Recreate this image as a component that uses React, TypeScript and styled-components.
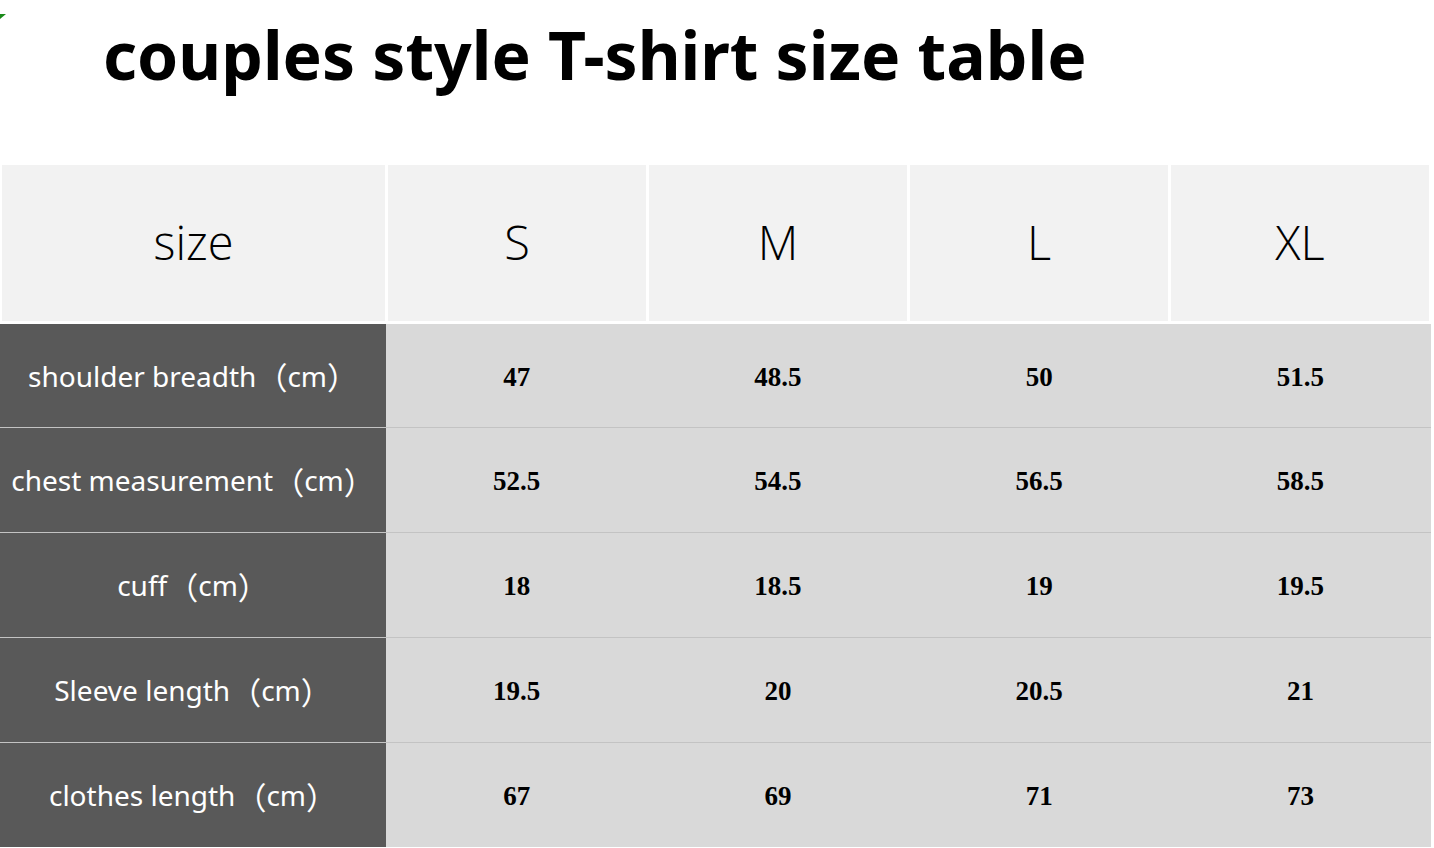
import React from 'react'
import styled, { createGlobalStyle } from 'styled-components'

const GlobalStyle = createGlobalStyle`
  html, body {
    margin: 0;
    padding: 0;
    background: #ffffff;
  }
`;

const Page = styled.div`
  position: relative;
  width: 1434px;
  height: 848px;
  overflow: hidden;
  background: #ffffff;
`;

const Corner = styled.svg`
  position: absolute;
  left: 0;
  top: 14px;
`;

const Title = styled.h1`
  margin: 0;
  height: 165px;
  padding: 9px 0 0 103px;
  box-sizing: border-box;
  font-family: "Noto Sans", "Open Sans", sans-serif;
  font-weight: 700;
  font-size: 66px;
  line-height: 90px;
  color: #000;
`;

const HeadRow = styled.div`
  display: grid;
  grid-template-columns: 383px repeat(4, 258px);
  column-gap: 3px;
  padding-left: 2px;
  height: 156px;
  margin-bottom: 3px;
`;

const HeadCell = styled.div`
  display: flex;
  align-items: center;
  justify-content: center;
  background: #f2f2f2;
  font-family: "Open Sans", "Noto Sans", sans-serif;
  font-weight: 300;
  font-size: 47px;
  color: #000;
  padding-bottom: 3px;
`;

const Body = styled.div`
  width: 1431px;
`;

const Row = styled.div<{ $first?: boolean }>`
  display: grid;
  grid-template-columns: 386px repeat(4, 1fr);
  height: ${({ $first }) => ($first ? '103px' : '105px')};
  border-top: ${({ $first }) => ($first ? 'none' : '1px solid #c3c3c3')};
  box-sizing: border-box;
`;

const Label = styled.div`
  display: flex;
  align-items: center;
  justify-content: center;
  background: #595959;
  color: #ffffff;
  font-family: "Noto Sans", "Open Sans", sans-serif;
  font-size: 28px;
  white-space: pre;
`;

const Paren = styled.span`
  font-family: "Noto Sans CJK SC", "Noto Sans", sans-serif;
  font-size: 31px;
`;

const Value = styled.div`
  display: flex;
  align-items: center;
  justify-content: center;
  background: #d9d9d9;
  color: #000;
  font-family: "Liberation Serif", "Times New Roman", serif;
  font-weight: 700;
  font-size: 27px;
  padding-top: 3px;
`;

const sizes = ['S', 'M', 'L', 'XL']

const rows = [
  { label: 'shoulder breadth', values: ['47', '48.5', '50', '51.5'] },
  { label: 'chest measurement', values: ['52.5', '54.5', '56.5', '58.5'] },
  { label: 'cuff', values: ['18', '18.5', '19', '19.5'] },
  { label: 'Sleeve length', values: ['19.5', '20', '20.5', '21'] },
  { label: 'clothes length', values: ['67', '69', '71', '73'] },
]

const App: React.FC = () => {
  return (
    <Page>
      <GlobalStyle />
      <Corner width="6" height="5" viewBox="0 0 6 5">
        <polygon points="0,0 6,0 0,5" fill="#1a8a1a" />
      </Corner>
      <Title>couples style T-shirt size table</Title>
      <HeadRow>
        <HeadCell>size</HeadCell>
        {sizes.map(s => (
          <HeadCell key={s}>{s}</HeadCell>
        ))}
      </HeadRow>
      <Body>
        {rows.map((row, i) => (
          <Row key={row.label} $first={i === 0}>
            <Label>
              {row.label}
              <Paren>（</Paren>cm<Paren>）</Paren>
            </Label>
            {row.values.map((v, j) => (
              <Value key={j}>{v}</Value>
            ))}
          </Row>
        ))}
      </Body>
    </Page>
  )
}

export default App
